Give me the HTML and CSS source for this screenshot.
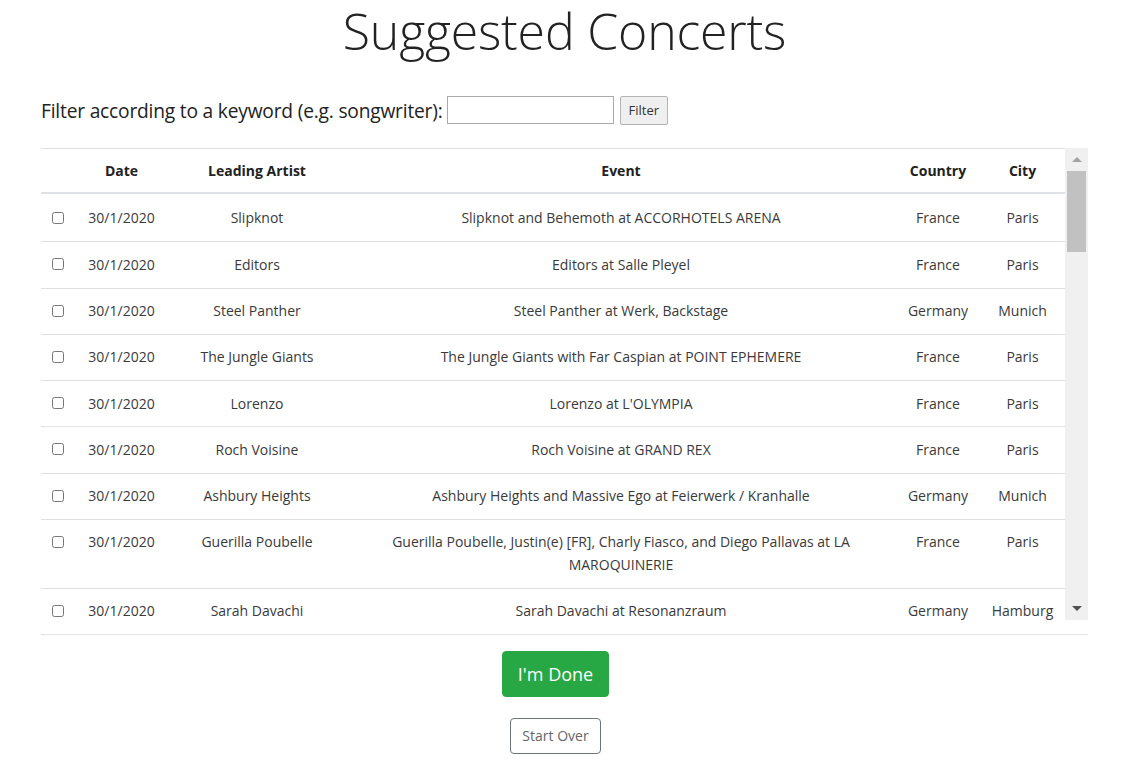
FILE: index.html
```html
<!DOCTYPE html>
<html>
<head>
<meta charset="utf-8">
<title>Suggested Concerts</title>
<link rel="stylesheet" href="styles.css">
</head>
<body>
<main class="page">
  <h1 class="title">Suggested Concerts</h1>
  <form class="filter">
    <label class="filter-label" for="kw">Filter according to a keyword (e.g. songwriter):</label>
    <input id="kw" class="filter-input" type="text">
    <button type="button" class="filter-btn">Filter</button>
  </form>
  <div class="table-wrap">
    <div class="table-clip">
      <table class="concerts">
        <colgroup>
          <col class="c-chk"><col class="c-date"><col class="c-artist"><col class="c-event"><col class="c-country"><col class="c-city">
        </colgroup>
        <thead>
          <tr><th></th><th>Date</th><th>Leading Artist</th><th>Event</th><th>Country</th><th>City</th></tr>
        </thead>
        <tbody>
          <tr><td class="chk"><input type="checkbox"></td><td>30/1/2020</td><td>Slipknot</td><td>Slipknot and Behemoth at ACCORHOTELS ARENA</td><td>France</td><td>Paris</td></tr>
          <tr><td class="chk"><input type="checkbox"></td><td>30/1/2020</td><td>Editors</td><td>Editors at Salle Pleyel</td><td>France</td><td>Paris</td></tr>
          <tr><td class="chk"><input type="checkbox"></td><td>30/1/2020</td><td>Steel Panther</td><td>Steel Panther at Werk, Backstage</td><td>Germany</td><td>Munich</td></tr>
          <tr><td class="chk"><input type="checkbox"></td><td>30/1/2020</td><td>The Jungle Giants</td><td>The Jungle Giants with Far Caspian at POINT EPHEMERE</td><td>France</td><td>Paris</td></tr>
          <tr><td class="chk"><input type="checkbox"></td><td>30/1/2020</td><td>Lorenzo</td><td>Lorenzo at L'OLYMPIA</td><td>France</td><td>Paris</td></tr>
          <tr><td class="chk"><input type="checkbox"></td><td>30/1/2020</td><td>Roch Voisine</td><td>Roch Voisine at GRAND REX</td><td>France</td><td>Paris</td></tr>
          <tr><td class="chk"><input type="checkbox"></td><td>30/1/2020</td><td>Ashbury Heights</td><td>Ashbury Heights and Massive Ego at Feierwerk / Kranhalle</td><td>Germany</td><td>Munich</td></tr>
          <tr><td class="chk"><input type="checkbox"></td><td>30/1/2020</td><td>Guerilla Poubelle</td><td>Guerilla Poubelle, Justin(e) [FR], Charly Fiasco, and Diego Pallavas at LA MAROQUINERIE</td><td>France</td><td>Paris</td></tr>
          <tr><td class="chk"><input type="checkbox"></td><td>30/1/2020</td><td>Sarah Davachi</td><td>Sarah Davachi at Resonanzraum</td><td>Germany</td><td>Hamburg</td></tr>
        </tbody>
      </table>
    </div>
    <div class="scrollbar">
      <div class="sb-btn"><span class="arrow-up"></span></div>
      <div class="sb-thumb"></div>
      <div class="sb-track"></div>
      <div class="sb-btn"><span class="arrow-down"></span></div>
    </div>
  </div>
  <div class="actions">
    <button type="button" class="btn-done">I'm Done</button>
    <button type="button" class="btn-over">Start Over</button>
  </div>
</main>
</body>
</html>
```
FILE: styles.css
```css
html, body {
  margin: 0;
  padding: 0;
  background: #fff;
}
body {
  font-family: "Open Sans", "Noto Sans", sans-serif;
  color: #333;
}
.page {
  padding: 0 54px 0 41px;
}
.title {
  margin: 0;
  font-size: 50px;
  font-weight: 300;
  line-height: 62px;
  text-align: center;
  color: #222;
  letter-spacing: -0.2px;
}
.filter {
  display: flex;
  align-items: center;
  margin-top: 33px;
  height: 30px;
}
.filter-label {
  font-size: 19.2px;
  color: #222;
  margin-right: 4px;
  letter-spacing: -0.2px;
}
.filter-input {
  width: 163px;
  height: 24px;
  border: 1px solid #a9a9a9;
  padding: 1px;
  margin: 0 6px 0 0;
}
.filter-btn {
  font-family: "Open Sans", sans-serif;
  font-size: 13px;
  height: 29px;
  padding: 0 8px;
  background: #efefef;
  border: 1px solid #b4b4b4;
  border-radius: 2px;
  color: #333;
}
.table-wrap {
  display: flex;
  align-items: flex-start;
  margin-top: 23px;
  border-bottom: 1px solid #dee2e6;
}
.table-clip {
  width: 1024px;
}
.concerts {
  width: 1024px;
  table-layout: fixed;
  border-collapse: collapse;
  font-size: 14px;
}
.c-chk { width: 34px; }
.c-date { width: 93px; }
.c-artist { width: 178px; }
.c-event { width: 550px; }
.c-country { width: 84px; }
.c-city { width: 85px; }
.concerts th {
  font-weight: 700;
  color: #222;
  border-top: 1px solid #dee2e6;
  border-bottom: 2px solid #dee2e6;
  padding: 11px 8px 10px;
  line-height: 22px;
  text-align: center;
}
.concerts td {
  border-top: 1px solid #dee2e6;
  padding: 11.4px 8px;
  line-height: 22.5px;
  text-align: center;
  vertical-align: top;
  color: #3a3a3a;
}
.concerts tbody tr:first-child td {
  border-top: 0;
  padding-top: 13.4px;
}
.concerts td.chk {
  padding: 12px 0 0 11px;
  text-align: left;
}
.concerts tbody tr:first-child td.chk {
  padding-top: 14px;
}
.chk input {
  width: 12px;
  height: 12px;
  margin: 4px 0 0 0;
}
.scrollbar {
  width: 23px;
  height: 472px;
  background: #f0f0f0;
  display: flex;
  flex-direction: column;
  align-items: center;
}
.sb-btn {
  height: 23px;
  width: 23px;
  display: flex;
  align-items: center;
  justify-content: center;
  flex: none;
}
.sb-thumb {
  width: 19px;
  height: 81px;
  background: #c1c1c1;
  flex: none;
}
.sb-track {
  flex: 1;
}
.arrow-up {
  width: 0;
  height: 0;
  border-left: 5px solid transparent;
  border-right: 5px solid transparent;
  border-bottom: 5px solid #a3a3a3;
}
.arrow-down {
  width: 0;
  height: 0;
  border-left: 5px solid transparent;
  border-right: 5px solid transparent;
  border-top: 5px solid #505050;
}
.actions {
  display: flex;
  flex-direction: column;
  align-items: center;
  padding: 16px 18px 0 0;
}
.btn-done {
  font-family: "Open Sans", sans-serif;
  background: #28a745;
  color: #fff;
  border: 1px solid #28a745;
  border-radius: 4px;
  font-size: 18px;
  line-height: 24px;
  width: 107px;
  height: 46px;
  padding: 0;
}
.btn-over {
  font-family: "Open Sans", sans-serif;
  margin-top: 21px;
  background: #fff;
  color: #666;
  border: 1px solid #6c757d;
  border-radius: 4px;
  font-size: 14px;
  line-height: 20px;
  width: 91px;
  height: 36px;
  padding: 0;
}
```
